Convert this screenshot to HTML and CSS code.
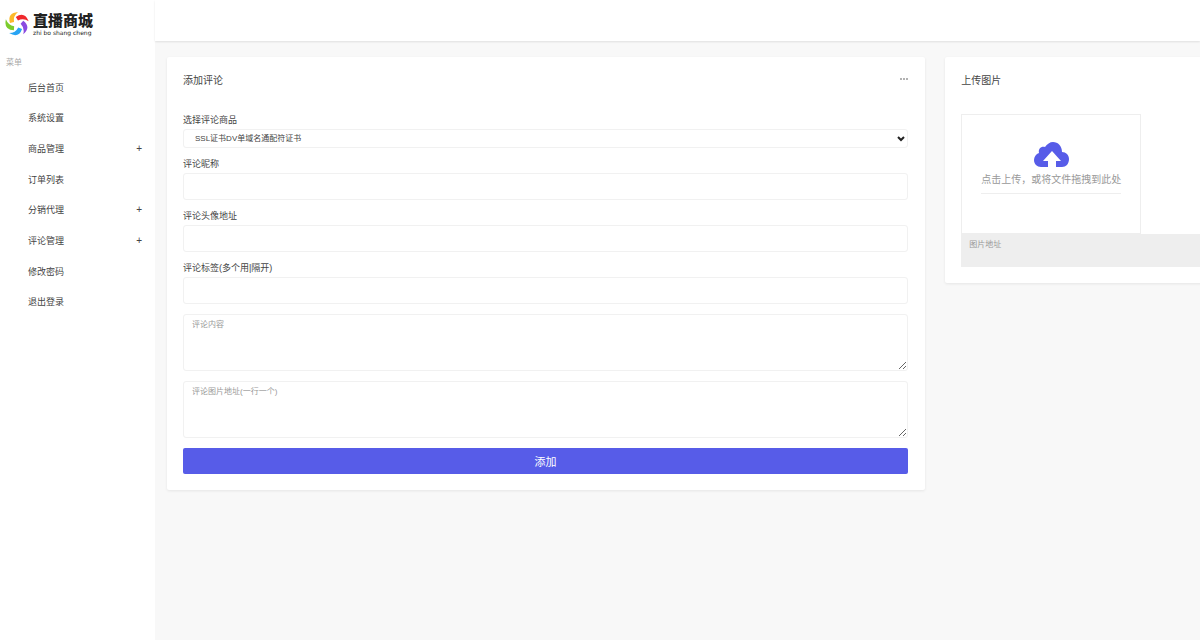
FILE: index.html
```
<!DOCTYPE html>
<html lang="zh-CN">
<head>
  <meta charset="utf-8">
  <title>直播商城</title>
  <link rel="stylesheet" href="styles.css">
</head>
<body>
  <aside class="sidebar">
    <a class="logo" href="#">
      <svg class="logo-mark" viewBox="0 0 24 24">
        <path fill="#fcb92a" d="M13 0Q2 1 5 11L9 10Q8 4 13 0Z"/>
        <path fill="#f0282c" transform="rotate(72 12 12)" d="M13 0Q2 1 5 11L9 10Q8 4 13 0Z"/>
        <path fill="#8a4ae0" transform="rotate(144 12 12)" d="M13 0Q2 1 5 11L9 10Q8 4 13 0Z"/>
        <path fill="#28a4f4" transform="rotate(216 12 12)" d="M13 0Q2 1 5 11L9 10Q8 4 13 0Z"/>
        <path fill="#7ccc2c" transform="rotate(288 12 12)" d="M13 0Q2 1 5 11L9 10Q8 4 13 0Z"/>
      </svg>
      <span class="logo-text">
        <strong>直播商城</strong>
        <small>zhi bo shang cheng</small>
      </span>
    </a>
    <div class="menu-title">菜单</div>
    <nav class="menu">
      <a href="#">后台首页</a>
      <a href="#">系统设置</a>
      <a href="#" class="has-sub">商品管理</a>
      <a href="#">订单列表</a>
      <a href="#" class="has-sub">分销代理</a>
      <a href="#" class="has-sub">评论管理</a>
      <a href="#">修改密码</a>
      <a href="#">退出登录</a>
    </nav>
  </aside>

  <div class="page">
    <header class="topbar"></header>
    <main class="content">
      <section class="card">
        <div class="card-header">
          <h2>添加评论</h2>
          <button type="button" class="more" aria-label="更多">
            <svg viewBox="0 0 8 2"><circle cx="1" cy="1" r="1"/><circle cx="4" cy="1" r="1"/><circle cx="7" cy="1" r="1"/></svg>
          </button>
        </div>
        <form class="form">
          <div class="form-group">
            <label for="goods">选择评论商品</label>
            <div class="select-wrap">
              <select id="goods">
                <option>SSL证书DV单域名通配符证书</option>
              </select>
              <svg class="arrow" viewBox="0 0 8 6"><path d="M1 1L4 4L7 1"/></svg>
            </div>
          </div>
          <div class="form-group">
            <label for="nickname">评论昵称</label>
            <input type="text" id="nickname">
          </div>
          <div class="form-group">
            <label for="avatar">评论头像地址</label>
            <input type="text" id="avatar">
          </div>
          <div class="form-group">
            <label for="tags">评论标签(多个用|隔开)</label>
            <input type="text" id="tags">
          </div>
          <textarea placeholder="评论内容" aria-label="评论内容"></textarea>
          <textarea placeholder="评论图片地址(一行一个)" aria-label="评论图片地址"></textarea>
          <button type="submit" class="submit">添加</button>
        </form>
      </section>

      <section class="card">
        <div class="card-header">
          <h2>上传图片</h2>
        </div>
        <button type="button" class="upload">
          <svg class="cloud" viewBox="0 0 35 25">
            <path d="M14 25H7C3 25 0 22 0 18C0 15 2 12 5 11C4 7 7 4 11 5C13 2 16 0 19 0C24 0 28 4 28 10C32 10 35 13 35 17C35 22 32 25 28 25H22V19H27L18 9L9 19H14Z"/>
          </svg>
          <span>点击上传，或将文件拖拽到此处</span>
        </button>
        <input type="text" class="image-url" placeholder="图片地址" aria-label="图片地址">
      </section>
    </main>
  </div>
</body>
</html>
```
FILE: styles.css
```
* {
  box-sizing: border-box;
}
body {
  margin: 0;
  display: flex;
  min-height: 100vh;
  background: #f8f8f8;
  color: #444;
  font-family: "Liberation Sans", "Noto Sans CJK SC", sans-serif;
  font-size: 9px;
  overflow-x: hidden;
}
input, select, textarea, button {
  font-family: inherit;
  color: inherit;
}
a {
  color: inherit;
  text-decoration: none;
}

/* sidebar */
.sidebar {
  flex: 0 0 155px;
  background: #fff;
}
.logo {
  display: flex;
  gap: 4px;
  padding: 12px 5px 0;
  height: 57px;
}
.logo-mark {
  width: 24px;
  height: 24px;
}
.logo-text {
  display: flex;
  flex-direction: column;
  color: #222;
}
.logo-text strong {
  font-size: 15px;
  font-weight: 900;
  line-height: 18px;
}
.logo-text small {
  font-family: "DejaVu Sans", sans-serif;
  font-size: 6px;
  line-height: 6px;
  white-space: nowrap;
}
.menu-title {
  padding-left: 6px;
  font-size: 8px;
  line-height: 12px;
  color: #aaa;
}
.menu {
  display: grid;
  grid-auto-rows: 1fr;
  height: 245px;
  margin-top: 3px;
}
.menu a {
  display: flex;
  align-items: center;
  justify-content: space-between;
  padding: 0 13px 0 28px;
}
.has-sub::after {
  content: "+";
  font-size: 10px;
}

/* page */
.page {
  flex: 1;
  min-width: 0;
}
.topbar {
  height: 41px;
  background: #fff;
  box-shadow: 0 1px 2px rgba(0, 0, 0, 0.1);
}
.content {
  display: grid;
  grid-template-columns: 73.4% 36%;
  gap: 20px;
  align-items: start;
  padding: 16px 0 16px 12px;
  overflow: hidden;
}
.card {
  padding: 15px 17px 16px 16px;
  background: #fff;
  border-radius: 2px;
  box-shadow: 0 1px 3px rgba(0, 0, 0, 0.08);
}
.card-header {
  display: flex;
  align-items: center;
  justify-content: space-between;
  height: 14px;
  margin-bottom: 28px;
}
.card-header h2 {
  margin: 0;
  font-size: 10px;
  font-weight: normal;
}
.more {
  display: flex;
  padding: 0;
  border: none;
  background: none;
}
.more svg {
  width: 8px;
  height: 2px;
  fill: #999;
}

/* form */
.form {
  display: flex;
  flex-direction: column;
  gap: 10px;
}
.form-group {
  display: flex;
  flex-direction: column;
  gap: 3px;
}
.form-group label {
  line-height: 12px;
}
.form input, .form select, .form textarea {
  width: 100%;
  border: 1px solid #f1f1f1;
  border-radius: 3px;
  background: #fff;
  font-size: 8px;
}
.form input {
  height: 27px;
  padding: 0 8px;
}
.select-wrap {
  display: grid;
  align-items: center;
}
.form select {
  grid-area: 1 / 1;
  height: 19px;
  padding: 0 11px;
  appearance: none;
}
.arrow {
  grid-area: 1 / 1;
  justify-self: end;
  width: 8px;
  height: 6px;
  margin-right: 3px;
  fill: none;
  stroke: #222;
  stroke-width: 2;
  pointer-events: none;
}
.form textarea {
  display: block;
  height: 57px;
  padding: 4px 8px;
  line-height: 12px;
  resize: vertical;
}
::placeholder {
  color: #999;
}
.submit {
  height: 26px;
  padding: 0 0 1px;
  border: none;
  border-radius: 2px;
  background: #575ce8;
  color: #fff;
  font-size: 11px;
}

/* upload */
.upload {
  display: flex;
  flex-direction: column;
  align-items: center;
  width: 180px;
  height: 120px;
  padding: 27px 0 0;
  border: 1px solid #eee;
  background: #fff;
  color: #999;
  font-size: 10px;
}
.cloud {
  width: 35px;
  height: 25px;
  fill: #575ce8;
}
.upload span {
  padding: 6px 0;
  border-bottom: 1px solid #eee;
  line-height: 14px;
}
.image-url {
  display: block;
  width: 100%;
  height: 33px;
  padding: 4px 8px 16px;
  border: none;
  background: #eee;
  font-size: 8px;
}
```
